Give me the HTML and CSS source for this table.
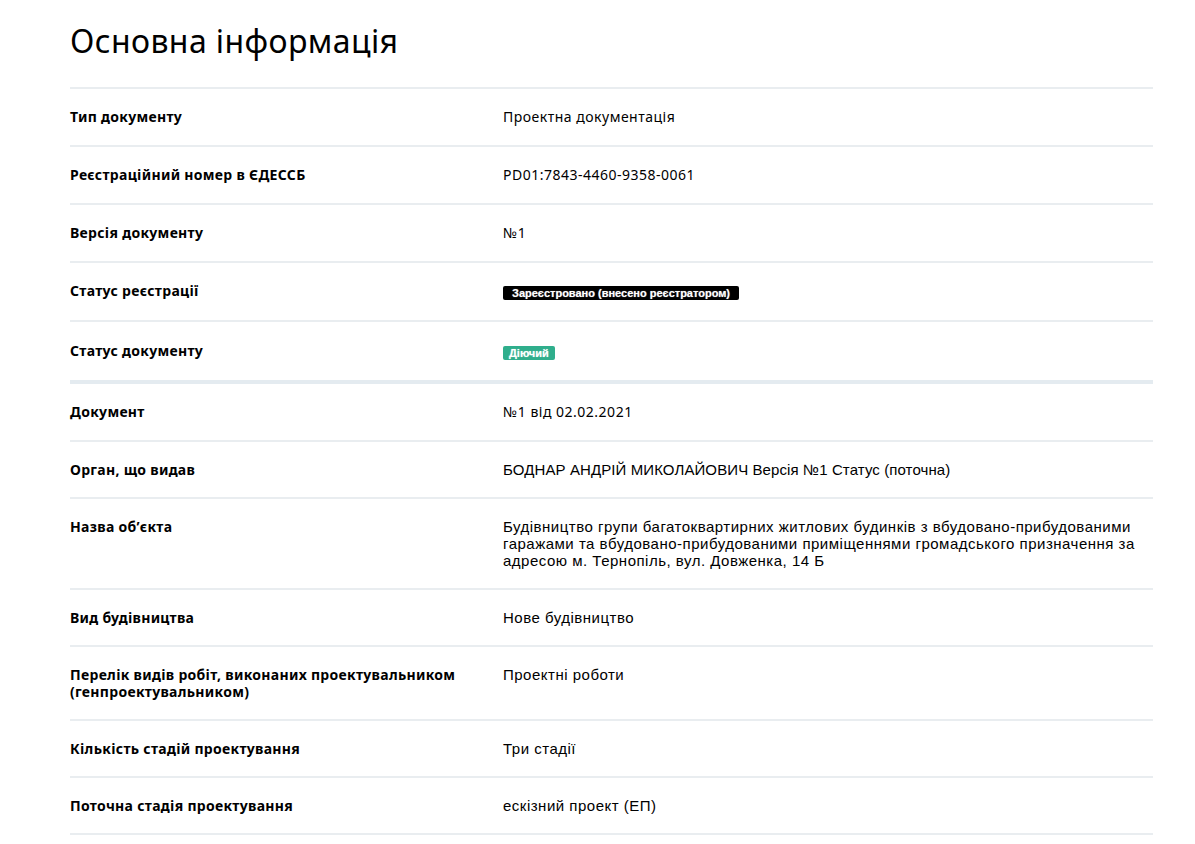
FILE: index.html
```html
<!DOCTYPE html>
<html lang="uk">
  <head>
    <meta charset="UTF-8" />
    <meta name="viewport" content="width=device-width, initial-scale=1.0" />
    <title>Основна інформація</title>
    <link rel="stylesheet" href="styles.css">
  </head>
  <body>
    <div class="page">
      <h1 class="title">Основна інформація</h1>

      <!-- Registration block -->
      <div class="info-table">
        <div class="row">
          <div class="label">Тип документу</div>
          <div class="value">Проектна документація</div>
        </div>
        <div class="row">
          <div class="label">Реєстраційний номер в ЄДЕССБ</div>
          <div class="value">PD01:7843-4460-9358-0061</div>
        </div>
        <div class="row">
          <div class="label">Версія документу</div>
          <div class="value">№1</div>
        </div>
        <div class="row row-badge">
          <div class="label">Статус реєстрації</div>
          <div class="value"><span class="badge badge-dark">Зареєстровано (внесено реєстратором)</span></div>
        </div>
        <div class="row row-badge row-last">
          <div class="label">Статус документу</div>
          <div class="value"><span class="badge badge-green">Діючий</span></div>
        </div>
      </div>

      <!-- Document block -->
      <div class="info-table">
        <div class="row">
          <div class="label">Документ</div>
          <div class="value">№1 від 02.02.2021</div>
        </div>
        <div class="row">
          <div class="label">Орган, що видав</div>
          <div class="value plain caps">БОДНАР АНДРІЙ МИКОЛАЙОВИЧ Версія №1 Статус (поточна)</div>
        </div>
        <div class="row">
          <div class="label">Назва об’єкта</div>
          <div class="value plain">Будівництво групи багатоквартирних житлових будинків з вбудовано-прибудованими гаражами та вбудовано-прибудованими приміщеннями громадського призначення за адресою м. Тернопіль, вул. Довженка, 14 Б</div>
        </div>
        <div class="row">
          <div class="label">Вид будівництва</div>
          <div class="value plain">Нове будівництво</div>
        </div>
        <div class="row">
          <div class="label">Перелік видів робіт, виконаних проектувальником (генпроектувальником)</div>
          <div class="value plain">Проектні роботи</div>
        </div>
        <div class="row">
          <div class="label">Кількість стадій проектування</div>
          <div class="value plain">Три стадії</div>
        </div>
        <div class="row">
          <div class="label">Поточна стадія проектування</div>
          <div class="value plain">ескізний проект (ЕП)</div>
        </div>
      </div>
    </div>
  </body>
</html>
```

FILE: styles.css
```css
body {
  margin: 0;
  font-family: "Noto Sans", Inter, sans-serif;
  background: #fff;
  color: #000;
}
.page {
  width: 1083px;
  margin-left: 70px;
}
.title {
  margin: 0;
  padding: 23px 0 28px;
  font-size: 32px;
  font-weight: 400;
  line-height: 36px;
  letter-spacing: 0.4px;
}
.info-table {
  border-top: 2px solid #e9edf0;
}
.info-table + .info-table {
  border-top: none;
}
.row {
  display: grid;
  grid-template-columns: 433px 1fr;
  padding: 19px 0;
  border-bottom: 2px solid #e9edf0;
}
.row-badge .value {
  line-height: 19px;
}
.row-last {
  padding: 20px 0 19px;
  border-bottom: 4px solid #e4ebf0;
}
.label {
  font-size: 14px;
  font-weight: 700;
  line-height: 17px;
  letter-spacing: 0.3px;
  padding-right: 20px;
}
.value {
  font-size: 14px;
  line-height: 18px;
  letter-spacing: 0.5px;
}
.value.plain {
  font-family: "Liberation Sans", Arial, sans-serif;
  font-size: 15px;
  line-height: 17px;
  letter-spacing: 0.5px;
}
.value.caps {
  letter-spacing: 0.1px;
}
.badge {
  display: inline-block;
  font-family: "Liberation Sans", Arial, sans-serif;
  font-size: 11px;
  font-weight: 700;
  line-height: 14px;
  letter-spacing: 0;
  padding: 0 9px;
  border-radius: 2px;
  color: #fff;
  text-shadow: 0 0 1px rgba(255, 255, 255, 0.6);
  vertical-align: middle;
}
.badge-dark {
  background-color: #000;
}
.badge-green {
  background-color: #2fae8c;
  padding: 0 6px;
}
```
